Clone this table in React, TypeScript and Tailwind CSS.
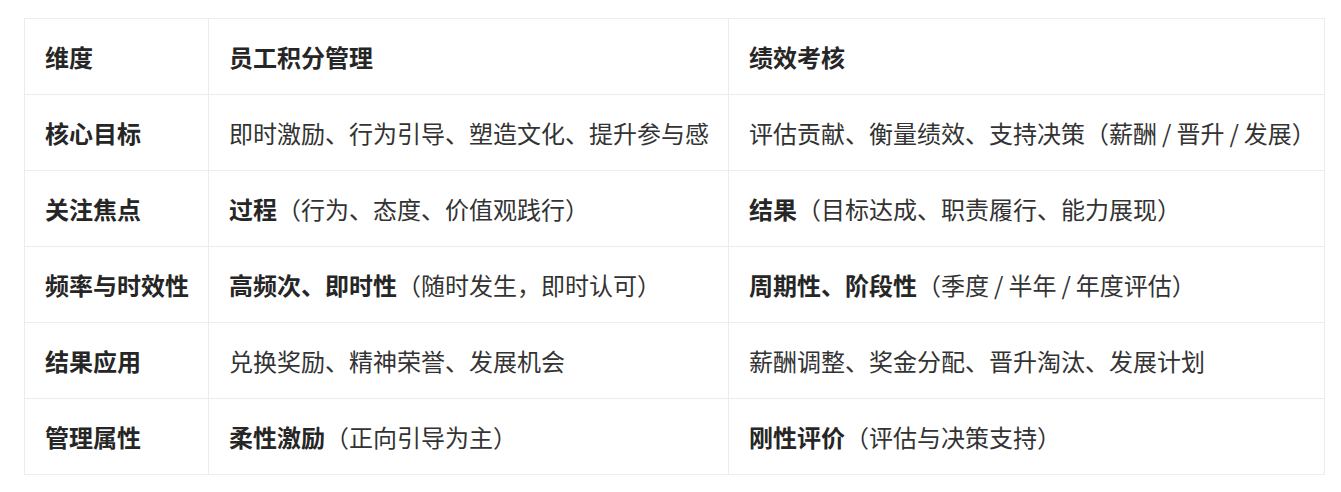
import type { ReactNode } from "react";

type Cell = { strong?: string; rest?: ReactNode };

type Row = { dimension: string; points: Cell; review: Cell };

function Slash() {
  return <span className="mx-[5px]">/</span>;
}

const rows: Row[] = [
  {
    dimension: "核心目标",
    points: { rest: "即时激励、行为引导、塑造文化、提升参与感" },
    review: {
      rest: (
        <>
          评估贡献、衡量绩效、支持决策（薪酬<Slash />晋升<Slash />发展）
        </>
      )
    }
  },
  {
    dimension: "关注焦点",
    points: { strong: "过程", rest: "（行为、态度、价值观践行）" },
    review: { strong: "结果", rest: "（目标达成、职责履行、能力展现）" }
  },
  {
    dimension: "频率与时效性",
    points: { strong: "高频次、即时性", rest: "（随时发生，即时认可）" },
    review: {
      strong: "周期性、阶段性",
      rest: (
        <>
          （季度<Slash />半年<Slash />年度评估）
        </>
      )
    }
  },
  {
    dimension: "结果应用",
    points: { rest: "兑换奖励、精神荣誉、发展机会" },
    review: { rest: "薪酬调整、奖金分配、晋升淘汰、发展计划" }
  },
  {
    dimension: "管理属性",
    points: { strong: "柔性激励", rest: "（正向引导为主）" },
    review: { strong: "刚性评价", rest: "（评估与决策支持）" }
  }
];

const cellClass =
  "border border-[#ececec] px-5 py-[19.5px] text-left align-middle whitespace-nowrap";

function CellText({ cell }: { cell: Cell }) {
  return (
    <>
      {cell.strong ? <strong className="font-bold text-[#262626]">{cell.strong}</strong> : null}
      {cell.rest}
    </>
  );
}

export default function App() {
  return (
    <div
      className="min-h-[492px] bg-white pt-[18px] pl-6 text-[24px] leading-[36px] text-[#333333]"
      style={{ fontFamily: '"Noto Sans CJK SC", "Noto Sans", sans-serif' }}
    >
      <table className="w-[1300px] table-fixed border-collapse">
        <colgroup>
          <col className="w-[184px]" />
          <col className="w-[520px]" />
          <col className="w-[596px]" />
        </colgroup>
        <thead>
          <tr>
            <th className={`${cellClass} font-bold text-[#262626]`}>维度</th>
            <th className={`${cellClass} font-bold text-[#262626]`}>员工积分管理</th>
            <th className={`${cellClass} font-bold text-[#262626]`}>绩效考核</th>
          </tr>
        </thead>
        <tbody>
          {rows.map((row) => (
            <tr key={row.dimension}>
              <td className={`${cellClass} font-bold text-[#262626]`}>{row.dimension}</td>
              <td className={cellClass}>
                <CellText cell={row.points} />
              </td>
              <td className={cellClass}>
                <CellText cell={row.review} />
              </td>
            </tr>
          ))}
        </tbody>
      </table>
    </div>
  );
}
